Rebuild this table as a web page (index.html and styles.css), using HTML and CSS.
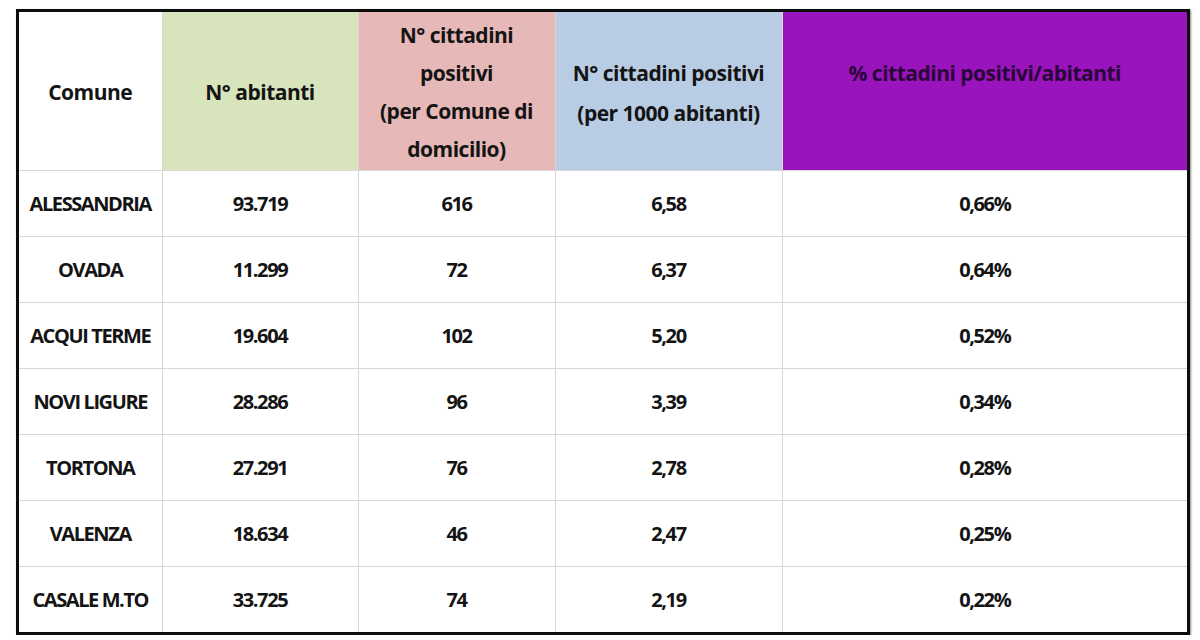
FILE: index.html
```html
<!DOCTYPE html>
<html lang="it">
<head>
<meta charset="utf-8">
<title>Positivi per Comune</title>
<link rel="stylesheet" href="styles.css">
</head>
<body>
<div class="frame">
  <table class="sheet">
    <colgroup>
      <col class="c1"><col class="c2"><col class="c3"><col class="c4"><col class="c5">
    </colgroup>
    <thead>
      <tr>
        <th class="h-white">Comune</th>
        <th class="h-green">N° abitanti</th>
        <th class="h-pink">N° cittadini<br>positivi<br>(per Comune di<br>domicilio)</th>
        <th class="h-blue">N° cittadini positivi<br>(per 1000 abitanti)</th>
        <th class="h-purple">% cittadini positivi/abitanti</th>
      </tr>
    </thead>
    <tbody>
      <tr><td class="name">ALESSANDRIA</td><td>93.719</td><td>616</td><td>6,58</td><td>0,66%</td></tr>
      <tr><td class="name">OVADA</td><td>11.299</td><td>72</td><td>6,37</td><td>0,64%</td></tr>
      <tr><td class="name">ACQUI TERME</td><td>19.604</td><td>102</td><td>5,20</td><td>0,52%</td></tr>
      <tr><td class="name">NOVI LIGURE</td><td>28.286</td><td>96</td><td>3,39</td><td>0,34%</td></tr>
      <tr><td class="name">TORTONA</td><td>27.291</td><td>76</td><td>2,78</td><td>0,28%</td></tr>
      <tr><td class="name">VALENZA</td><td>18.634</td><td>46</td><td>2,47</td><td>0,25%</td></tr>
      <tr><td class="name">CASALE M.TO</td><td>33.725</td><td>74</td><td>2,19</td><td>0,22%</td></tr>
    </tbody>
  </table>
</div>
</body>
</html>
```
FILE: styles.css
```css
html, body {
  margin: 0;
  padding: 0;
  background: #ffffff;
}
body {
  padding: 9px 0 0 16px;
  font-family: "Open Sans", "Liberation Sans", sans-serif;
  color: #141414;
}
.frame {
  width: 1168px;
  border: 3px solid #0d0d0d;
  box-shadow: 1px 1px 2px #8a8a8a;
  background: #ffffff;
}
.sheet {
  width: 1168px;
  border-collapse: collapse;
  table-layout: fixed;
  font-weight: 700;
}
.c1 { width: 143px; }
.c2 { width: 196px; }
.c3 { width: 197px; }
.c4 { width: 227px; }
.c5 { width: 405px; }
.sheet th, .sheet td {
  border: 1px solid #d6d6d6;
  text-align: center;
  padding: 0;
}
.sheet tr > :first-child { border-left: none; }
.sheet tr > :last-child { border-right: none; }
.sheet thead th { border-top: none; }
.sheet tbody tr:last-child td { border-bottom: none; }
.sheet thead tr { height: 158px; }
.sheet tbody tr { height: 66px; }
.sheet th {
  font-weight: 700;
  font-size: 21px;
  letter-spacing: -0.5px;
  line-height: 39px;
  vertical-align: middle;
  padding-top: 3px;
}
.h-white { background: #ffffff; }
.h-green { background: #d8e4bc; }
.h-pink {
  background: #e6b8b7;
  line-height: 38px !important;
  vertical-align: top !important;
  padding-top: 4px !important;
}
.h-blue {
  background: #b8cce4;
  line-height: 40px !important;
  padding-top: 4px !important;
}
.h-purple {
  background: #9a14bd;
  color: #2a0638;
  vertical-align: top !important;
  padding-top: 42px !important;
}
.sheet td {
  vertical-align: middle;
  font-size: 20px;
  letter-spacing: -1.4px;
  line-height: 24px;
  padding-top: 2px;
}
```
